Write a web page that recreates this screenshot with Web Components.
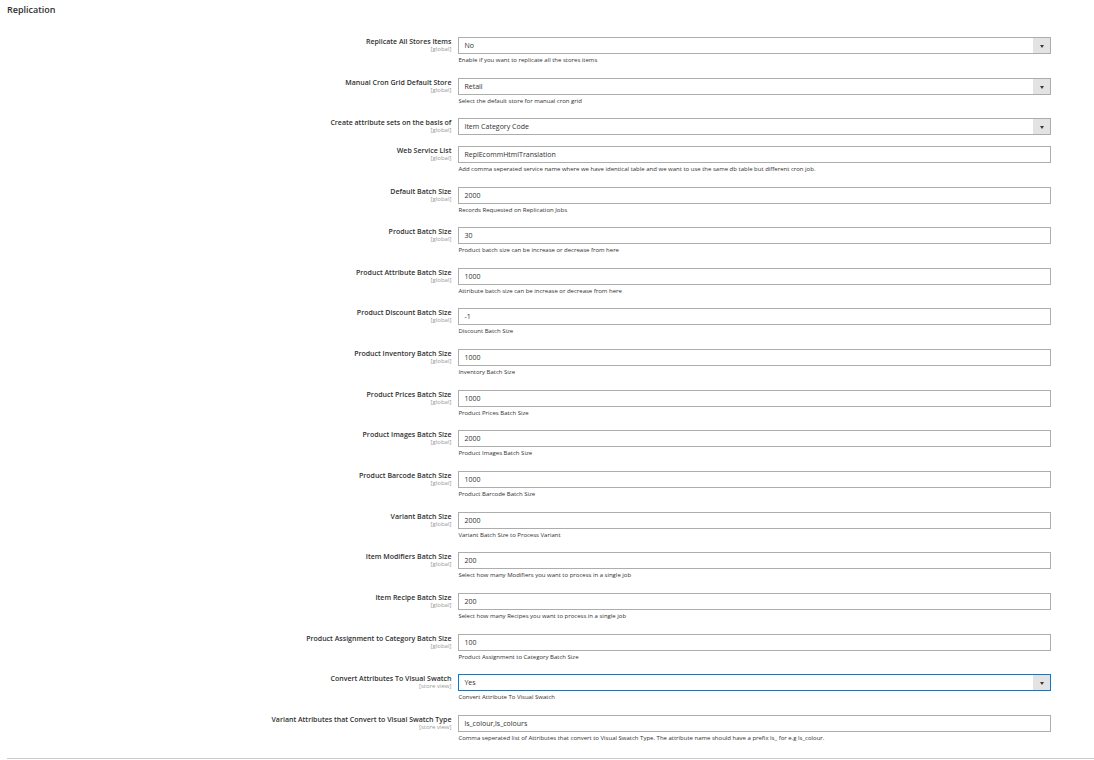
<!DOCTYPE html>
<html lang="en">
<head>
<meta charset="utf-8">
<title>Replication</title>
<style>
  body {
    margin: 0;
    padding: 0 0 1px 7px;
    background: #fff;
    color: #303030;
    font-family: "Open Sans", "Noto Sans", sans-serif;
  }
</style>
</head>
<body>
<config-section heading="Replication">
  <config-select name="replicate_all" label="Replicate All Stores Items" options="No|Yes">Enable if you want to replicate all the stores items</config-select>
  <config-select name="cron_store" label="Manual Cron Grid Default Store" options="Retail">Select the default store for manual cron grid</config-select>
  <config-select name="attribute_sets" label="Create attribute sets on the basis of" options="Item Category Code"></config-select>
  <config-text name="web_services" label="Web Service List" value="ReplEcommHtmlTranslation">Add comma seperated service name where we have identical table and we want to use the same db table but different cron job.</config-text>
  <config-text name="default_batch" label="Default Batch Size" value="2000">Records Requested on Replication Jobs</config-text>
  <config-text name="product_batch" label="Product Batch Size" value="30">Product batch size can be increase or decrease from here</config-text>
  <config-text name="attribute_batch" label="Product Attribute Batch Size" value="1000">Attribute batch size can be increase or decrease from here</config-text>
  <config-text name="discount_batch" label="Product Discount Batch Size" value="-1">Discount Batch Size</config-text>
  <config-text name="inventory_batch" label="Product Inventory Batch Size" value="1000">Inventory Batch Size</config-text>
  <config-text name="prices_batch" label="Product Prices Batch Size" value="1000">Product Prices Batch Size</config-text>
  <config-text name="images_batch" label="Product Images Batch Size" value="2000">Product Images Batch Size</config-text>
  <config-text name="barcode_batch" label="Product Barcode Batch Size" value="1000">Product Barcode Batch Size</config-text>
  <config-text name="variant_batch" label="Variant Batch Size" value="2000">Variant Batch Size to Process Variant</config-text>
  <config-text name="modifiers_batch" label="Item Modifiers Batch Size" value="200">Select how many Modifiers you want to process in a single job</config-text>
  <config-text name="recipe_batch" label="Item Recipe Batch Size" value="200">Select how many Recipes you want to process in a single job</config-text>
  <config-text name="category_batch" label="Product Assignment to Category Batch Size" value="100">Product Assignment to Category Batch Size</config-text>
  <config-select name="visual_swatch" label="Convert Attributes To Visual Swatch" scope="store view" options="Yes|No" active>Convert Attribute To Visual Swatch</config-select>
  <config-text name="swatch_attributes" label="Variant Attributes that Convert to Visual Swatch Type" scope="store view" value="ls_colour,ls_colours">Comma seperated list of Attributes that convert to Visual Swatch Type. The attribute name should have a prefix ls_ for e.g ls_colour.</config-text>
</config-section>

<script>
// Define templates.
const sectionTemplate = document.createElement('template')
sectionTemplate.innerHTML = `
<style>
  :host {
    display: flex;
    flex-direction: column;
    box-sizing: border-box;
    min-height: calc(100vh - 1px);
    padding-bottom: 13px;
    border-bottom: 1px solid #ccc;
  }
  h2 {
    margin: 3px 0 20px;
    font-size: 9px;
    font-weight: 600;
    line-height: 14px;
  }
  .fields {
    flex: 1;
    display: flex;
    flex-direction: column;
    justify-content: space-between;
    padding-right: 43px;
  }
</style>

<h2></h2>
<div class="fields"><slot></slot></div>
`

const fieldTemplate = document.createElement('template')
fieldTemplate.innerHTML = `
<style>
  :host {
    display: grid;
    grid-template-columns: 3fr 4fr;
    column-gap: 7px;
  }
  label {
    text-align: right;
    font-size: 7px;
    font-weight: 600;
    line-height: 9px;
  }
  .scope {
    display: block;
    color: #999;
    font-size: 6px;
    font-weight: 400;
    line-height: 6px;
  }
  .control {
    display: grid;
  }
  input,
  select {
    grid-area: 1 / 1;
    appearance: none;
    box-sizing: border-box;
    width: 100%;
    height: 17px;
    margin: 0;
    padding: 0 5px;
    border: 1px solid #adadad;
    border-radius: 0;
    outline: 0;
    background: #fff;
    color: inherit;
    font: inherit;
    font-size: 7px;
    line-height: 15px;
  }
  .arrow {
    grid-area: 1 / 1;
    justify-self: end;
    display: grid;
    place-items: center;
    width: 17px;
    margin: 1px;
    background: #e3e3e3;
    pointer-events: none;
  }
  .arrow svg {
    width: 4px;
    height: 3px;
    margin-top: 2px;
    fill: #41362f;
  }
  :host([active]) select,
  select:focus,
  input:focus {
    border-color: #007bdb;
  }
  .note {
    margin: 0;
    font-size: 6px;
    line-height: 8px;
    padding: 2px 0 3px;
  }
</style>

<label for="field"><span class="text"></span><span class="scope"></span></label>
<div>
  <div class="control"></div>
  <p class="note" id="note"><slot></slot></p>
</div>
`

customElements.define(
  'config-section',
  /**
   * Represents a group of settings under a heading.
   */
  class extends HTMLElement {
    /**
     * Creates an instance of the current type.
     */
    constructor () {
      super()

      this.attachShadow({ mode: 'open' }).append(
        sectionTemplate.content.cloneNode(true)
      )
    }

    /**
     * Called when the element is inserted into the DOM.
     */
    connectedCallback () {
      this.shadowRoot.querySelector('h2').textContent = this.getAttribute('heading')
    }
  }
)

/**
 * Base class for a row with a label, a control and a note.
 */
class ConfigField extends HTMLElement {
  /**
   * Creates an instance of the current type.
   */
  constructor () {
    super()

    this.attachShadow({ mode: 'open' }).append(
      fieldTemplate.content.cloneNode(true)
    )
  }

  /**
   * Called when the element is inserted into the DOM.
   */
  connectedCallback () {
    const root = this.shadowRoot
    root.querySelector('.text').textContent = this.getAttribute('label')
    root.querySelector('.scope').textContent = `[${this.getAttribute('scope') || 'global'}]`

    const control = this.createControl()
    control.id = 'field'
    control.name = this.getAttribute('name')
    root.querySelector('.control').prepend(control)

    // Rows without a note are only as tall as their control.
    if (this.textContent.trim()) {
      control.setAttribute('aria-describedby', 'note')
    } else {
      root.querySelector('.note').remove()
    }
  }
}

customElements.define(
  'config-text',
  /**
   * Represents a text setting.
   */
  class extends ConfigField {
    /**
     * Creates the text box.
     *
     * @returns {HTMLInputElement} - The text box.
     */
    createControl () {
      const input = document.createElement('input')
      input.type = 'text'
      input.value = this.getAttribute('value')
      return input
    }
  }
)

customElements.define(
  'config-select',
  /**
   * Represents a drop-down setting.
   */
  class extends ConfigField {
    /**
     * Creates the drop-down and its arrow.
     *
     * @returns {HTMLSelectElement} - The drop-down.
     */
    createControl () {
      const select = document.createElement('select')
      select.append(...this.getAttribute('options').split('|').map(text => new Option(text)))

      const arrow = document.createElement('span')
      arrow.className = 'arrow'
      arrow.innerHTML = '<svg viewBox="0 0 4 3" aria-hidden="true"><path d="M0 0h4L2 3z"/></svg>'
      this.shadowRoot.querySelector('.control').append(arrow)

      return select
    }
  }
)
</script>
</body>
</html>
